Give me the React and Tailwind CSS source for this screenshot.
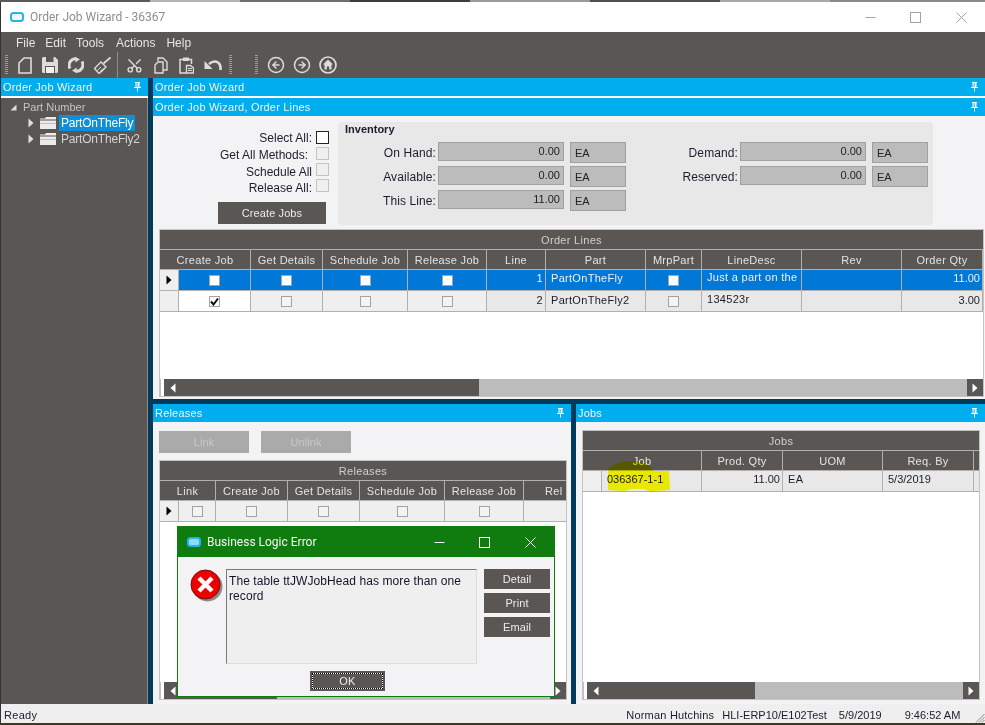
import React from "react";
import { Scissors, CircleArrowLeft, CircleArrowRight } from "lucide-react";

const Pin = () => (
  <svg width="7" height="10" viewBox="0 0 7 10" className="shrink-0">
    <path d="M1 0H6V1H5.5V5H7V6H4V9.5H3V6H0V5H1.5V1H1Z" fill="#fff" />
    <rect x="2.6" y="1" width="1" height="4" fill="#00aeef" />
  </svg>
);

const Header = ({ title, pin = true, className = "" }) => (
  <div className={"h-[18px] bg-[#00aeef] flex items-center justify-between pl-[2px] pr-[7px] text-[#f2f2f2] text-[11px] tracking-[0.2px] shrink-0 " + className}>
    <span className="whitespace-nowrap">{title}</span>
    {pin && <Pin />}
  </div>
);

const Grip = () => (
  <svg width="3" height="20" viewBox="0 0 3 20" className="shrink-0">
    {[0, 2, 4, 6, 8, 10, 12, 14, 16, 18].map((y) => (
      <rect key={y} x="0" y={y} width="3" height="1" fill="#9c9a97" />
    ))}
  </svg>
);

const Logo = ({ inner = "#f4f4f4" }) => (
  <svg width="14" height="10" viewBox="0 0 14 10" className="shrink-0">
    <rect x="1" y="1" width="12" height="8" rx="2.5" fill={inner} stroke="#22b5ea" strokeWidth="2" />
  </svg>
);

const WinButtons = ({ color, gapA, gapB }) => (
  <div className="flex items-center">
    <svg width="11" height="11" viewBox="0 0 11 11"><path d="M0.5 5.5H10.5" stroke={color} strokeWidth="1" /></svg>
    <svg width="11" height="11" viewBox="0 0 11 11" className={gapA}><rect x="0.5" y="0.5" width="10" height="10" fill="none" stroke={color} strokeWidth="1" /></svg>
    <svg width="11" height="11" viewBox="0 0 11 11" className={gapB}><path d="M0.5 0.5L10.5 10.5M10.5 0.5L0.5 10.5" stroke={color} strokeWidth="1" /></svg>
  </div>
);

const IC = "#dcdcdc";

const ToolIcons = () => (
  <div className="h-[26px] flex items-center pl-[4px] shrink-0">
    <Grip />
    <svg width="14" height="17" viewBox="0 0 14 17" className="ml-[10px]">
      <path d="M1 6L6 1H13V16H1Z" fill="none" stroke={IC} strokeWidth="1.6" />
    </svg>
    <svg width="16" height="16" viewBox="0 0 16 16" className="ml-[10px]">
      <path d="M0 1.5Q0 0 1.5 0H13L16 3V14.5Q16 16 14.5 16H1.5Q0 16 0 14.5Z" fill={IC} />
      <rect x="4" y="0" width="7.5" height="5" fill="#595653" />
      <rect x="3" y="9" width="10" height="7" fill="#595653" />
      <rect x="4" y="10" width="8" height="6" fill="#f0f0f0" />
    </svg>
    <svg width="16" height="16" viewBox="0 0 16 16" className="ml-[10px]">
      <path d="M2 11.5A6.5 6.5 0 0 1 8.5 1.8" fill="none" stroke={IC} strokeWidth="3" />
      <path d="M14 4.5A6.5 6.5 0 0 1 7.5 14.2" fill="none" stroke={IC} strokeWidth="3" />
      <path d="M7 0L12 2.2L7.5 5.5Z" fill={IC} />
      <path d="M9 16L4 13.8L8.5 10.5Z" fill={IC} />
    </svg>
    <svg width="17" height="17" viewBox="0 0 17 17" className="ml-[10px]">
      <path d="M16.5 0.5L9.5 6.5" stroke={IC} strokeWidth="1.8" />
      <path d="M7 5L12 10L8 14L5 16.5L0.5 11.5L3.5 8.5Z" fill="none" stroke={IC} strokeWidth="1.4" />
      <path d="M3.5 13.5L7 10M6 15L9 11.5" stroke={IC} strokeWidth="1" />
    </svg>
    <div className="w-px h-[26px] bg-[#8f8d8a] ml-[6px]" />
    <Scissors size={17} color={IC} strokeWidth={2} className="ml-[8px] -rotate-90" />
    <svg width="14" height="17" viewBox="0 0 14 17" className="ml-[11px]">
      <path d="M4 4V1H9L13 5V13H9" fill="none" stroke={IC} strokeWidth="1.4" />
      <path d="M1 8L4 5H9V16H1Z" fill="none" stroke={IC} strokeWidth="1.4" />
    </svg>
    <svg width="15" height="17" viewBox="0 0 15 17" className="ml-[11px]">
      <path d="M4 2.5H1V16H7M10 2.5H12.5V7" fill="none" stroke={IC} strokeWidth="1.5" />
      <rect x="4" y="0.5" width="6" height="3.5" fill={IC} />
      <path d="M7.5 8.5H11.5L14.5 11V16H7.5Z" fill="none" stroke={IC} strokeWidth="1.4" />
      <path d="M9 11.5H13M9 13.5H13" stroke={IC} strokeWidth="1" />
    </svg>
    <svg width="18" height="12" viewBox="0 0 18 12" className="ml-[10px]">
      <path d="M5 5Q10 1 14 3.5Q17 5.5 16.5 11" fill="none" stroke={IC} strokeWidth="2.6" />
      <path d="M0.5 2V10H8.5Z" fill={IC} />
    </svg>
    <div className="ml-[7px]"><Grip /></div>
    <div className="ml-[23px]"><Grip /></div>
    <CircleArrowLeft size={18} color={IC} strokeWidth={2} className="ml-[9px]" />
    <CircleArrowRight size={18} color={IC} strokeWidth={2} className="ml-[8px]" />
    <svg width="18" height="18" viewBox="0 0 18 18" className="ml-[8px]">
      <circle cx="9" cy="9" r="8" fill="none" stroke={IC} strokeWidth="1.7" />
      <path d="M9 3.5L14 8.5H12.5V13.5H10.2V10.5H7.8V13.5H5.5V8.5H4Z" fill={IC} />
    </svg>
  </div>
);

const Tri = ({ color = "#e0e0e0", className = "" }) => (
  <svg width="6" height="10" viewBox="0 0 6 10" className={className}>
    <path d="M0.5 0.5L5.5 5L0.5 9.5Z" fill={color} />
  </svg>
);

const Folder = () => (
  <svg width="16" height="12" viewBox="0 0 16 12" className="shrink-0">
    <path d="M0 1.5H5L6 0H16V2.5H0Z" fill="#ececec" />
    <rect x="0" y="3.5" width="16" height="8.5" fill="#ececec" />
    <rect x="0" y="6" width="16" height="1" fill="#bdbdbd" />
  </svg>
);

const TreeRow = ({ label, selected }) => (
  <div className="h-[16px] flex items-center pl-[27px]">
    <Tri />
    <div className="w-[6px]" />
    <Folder />
    <div className={"ml-[3px] h-[16px] flex items-center px-[2px] text-[12px] tracking-[-0.2px] whitespace-nowrap " + (selected ? "bg-[#0d8fd9] text-white" : "text-[#d4d4d4]")}>
      {label}
    </div>
  </div>
);

const Check = ({ checked, dim }) => (
  <div className={"w-[11px] h-[11px] border border-[#a3a3a3] flex items-center justify-center " + (dim ? "bg-[#f4f4f4]" : "bg-white")}>
    {checked && (
      <svg width="9" height="9" viewBox="0 0 9 9"><path d="M1 4.5L3.5 7.5L8 1.5" fill="none" stroke="#111" strokeWidth="2" /></svg>
    )}
  </div>
);

const Scroll = ({ thumb }) => (
  <div className="h-[17px] flex shrink-0 items-stretch bg-[#bcbcbc] border-l border-[#c0c0c0]">
    <div className="w-[4px] bg-white border-r border-[#595653] shrink-0" />
    <div className={"bg-[#595653] flex items-center pl-[5px] shrink-0 " + thumb}>
      <Tri color="#fff" className="-scale-x-100" />
    </div>
    <div className="flex-1" />
    <div className="w-[16px] bg-[#595653] flex items-center justify-center shrink-0">
      <Tri color="#fff" />
    </div>
  </div>
);

const GridTitle = ({ children }) => (
  <div className="h-[20px] shrink-0 bg-[#595653] border-b border-[#b0b0b0] flex items-center justify-center pt-[2px] text-[#d0d0d0] text-[11px] tracking-[0.3px]">
    {children}
  </div>
);

const HCell = ({ w, children, last, className = "" }) => (
  <div className={w + " shrink-0 h-full flex items-center justify-center pt-[2px] whitespace-nowrap overflow-hidden " + (last ? "" : "border-r border-[#b0b0b0] ") + className}>
    {children}
  </div>
);

const HRow = ({ children }) => (
  <div className="h-[20px] shrink-0 bg-[#595653] border-b border-[#b0b0b0] flex text-[#e4e4e4] text-[11px] tracking-[0.3px]">
    {children}
  </div>
);

const DCell = ({ w, children, cls = "", align = "center" }) => (
  <div
    className={
      w +
      " shrink-0 h-full border-r border-[#b0b0b0] flex items-center whitespace-nowrap overflow-hidden " +
      (align === "center" ? "justify-center " : align === "right" ? "justify-end pr-[2px] " : "justify-start pl-[5px] ") +
      cls
    }
  >
    {children}
  </div>
);

const DRow = ({ children, cls }) => (
  <div className={"h-[21px] shrink-0 border-b border-[#b0b0b0] flex text-[11px] tracking-[0.3px] " + cls}>{children}</div>
);

const Label = ({ children, pr = "pr-[4px]", cls = "" }) => (
  <div className={"h-[16px] flex items-center justify-end text-[12px] text-[#1c1c2c] " + cls}>
    <span className={pr}>{children}</span>
  </div>
);

const InvRow = ({ label, value, labelW }) => (
  <div className="h-[24px] flex items-start">
    <div className={labelW + " h-[19px] pt-[2px] flex items-center justify-end text-[12px] text-[#1c1c2c] tracking-[0.1px]"}>{label}</div>
    <div className="ml-[2px] w-[126px] h-[19px] bg-[#bcbcbc] border border-[#a0a0a0] flex items-center justify-end pr-[3px] text-[11px] text-[#222]">{value}</div>
    <div className="ml-[6px] w-[56px] h-[21px] bg-[#bcbcbc] border border-[#a0a0a0] flex items-center pl-[4px] pt-[2px] text-[11px] text-[#222]">EA</div>
  </div>
);

const Btn = ({ w, children, cls = "bg-[#595653] text-[#ececec]", h = "h-[22px]" }) => (
  <div className={w + " " + h + " " + cls + " flex items-center justify-center text-[11px] tracking-[0.1px] shrink-0"}>{children}</div>
);

const ErrorIcon = () => (
  <svg width="34" height="34" viewBox="0 0 34 34" className="shrink-0">
    <circle cx="17.5" cy="17.5" r="15" fill="#8a8a8a" />
    <circle cx="15.5" cy="15.5" r="14.5" fill="#ee0000" stroke="#7c0b0b" strokeWidth="1" />
    <path d="M9 9L22 22M22 9L9 22" stroke="#fff" strokeWidth="4.4" />
  </svg>
);

const GridBox = ({ children, cls }) => (
  <div className={"border border-[#c4c4c4] bg-white flex flex-col overflow-hidden " + cls}>{children}</div>
);

const TopStrip = () => (
  <div className="h-[2px] shrink-0 flex bg-[#8a8a8a]">
    <div className="w-[150px] bg-[#5a5a5a]" />
    <div className="w-[90px] bg-[#b4b4b4]" />
    <div className="w-[110px] bg-[#6e6e6e]" />
    <div className="w-[120px] bg-[#3c3c3c]" />
    <div className="w-[120px] bg-[#9a9a9a]" />
    <div className="w-[130px] bg-[#505050]" />
    <div className="w-[110px] bg-[#a8a8a8]" />
  </div>
);

export default function App() {
  return (
    <div className="relative w-[985px] h-[725px] overflow-hidden flex flex-col bg-[#333] font-['Liberation_Sans',sans-serif]">
      <TopStrip />
      <div className="flex-1 min-h-0 flex flex-col ml-px bg-[#efefef]">
        <div className="h-[30px] shrink-0 bg-white flex items-center justify-between pl-[9px] pr-[18px]">
          <div className="flex items-center gap-[6px]">
            <Logo />
            <span className="text-[12px] text-[#8e8e8e] font-['Roboto',sans-serif]">Order Job Wizard - 36367</span>
          </div>
          <WinButtons color="#a3a3a3" gapA="ml-[34px]" gapB="ml-[35px]" />
        </div>

        <div className="h-[46px] shrink-0 bg-[#595653] flex flex-col">
          <div className="h-[20px] shrink-0 flex items-center pl-[15px] gap-[10px] text-[12px] text-[#e6e6e6] pt-[1px]">
            <span>File</span><span>Edit</span><span>Tools</span><span className="ml-[2px]">Actions</span><span className="ml-[1px]">Help</span>
          </div>
          <ToolIcons />
        </div>

        <div className="h-[626px] shrink-0 flex bg-[#023a5c]">
          <div className="w-[147px] shrink-0 flex flex-col bg-[#595653]">
            <Header title="Order Job Wizard" />
            <div className="h-[2px] bg-white shrink-0" />
            <div className="flex-1 pt-[1px] border-r border-[#8a8a8a]">
              <div className="h-[16px] flex items-center pl-[9px] text-[11px] text-[#c4c4c4]">
                <svg width="7" height="7" viewBox="0 0 7 7"><path d="M6.5 0.5V6.5H0.5Z" fill="#dcdcdc" /></svg>
                <span className="ml-[6px]">Part Number</span>
              </div>
              <TreeRow label="PartOnTheFly" selected />
              <TreeRow label="PartOnTheFly2" />
            </div>
          </div>

          <div className="w-[5px] shrink-0" />

          <div className="flex-1 min-w-0 flex flex-col">
            <Header title="Order Job Wizard" />
            <div className="h-[2px] bg-white shrink-0" />
            <Header title="Order Job Wizard, Order Lines" />

            <div className="h-[283px] shrink-0 bg-[#f3f3f5] flex flex-col">
              <div className="h-[113px] shrink-0 flex">
                <div className="w-[185px] shrink-0 pt-[15px]">
                  <div className="w-[176px]">
                    <div className="flex flex-col">
                      <div className="flex justify-end items-start h-[16px]"><Label cls="pb-[2px]">Select All:</Label><div className="w-[13px] h-[13px] border border-[#222] bg-white" /></div>
                      <div className="flex justify-end items-start h-[16px]"><Label pr="pr-[8px]">Get All Methods:</Label><div className="w-[13px] h-[13px] border border-[#c4c4c4] bg-[#efefef]" /></div>
                      <div className="flex justify-end items-start h-[16px]"><Label cls="pt-[2px]">Schedule All</Label><div className="w-[13px] h-[13px] border border-[#c4c4c4] bg-[#efefef]" /></div>
                      <div className="flex justify-end items-start h-[16px]"><Label cls="pt-[2px]">Release All:</Label><div className="w-[13px] h-[13px] border border-[#c4c4c4] bg-[#efefef]" /></div>
                    </div>
                    <div className="mt-[7px] ml-[65px]"><Btn w="w-[108px]">Create Jobs</Btn></div>
                  </div>
                </div>
                <div className="w-[595px] h-[103px] mt-[6px] shrink-0 bg-[#e8e8e8] rounded-[4px]">
                  <div className="h-[20px] pl-[7px] pt-[1px] flex items-start text-[11px] leading-[12px] font-bold text-[#1c1c2c]">Inventory</div>
                  <div className="flex">
                    <div className="flex flex-col">
                      <InvRow label="On Hand:" value="0.00" labelW="w-[98px]" />
                      <InvRow label="Available:" value="0.00" labelW="w-[98px]" />
                      <InvRow label="This Line:" value="11.00" labelW="w-[98px]" />
                    </div>
                    <div className="flex flex-col">
                      <InvRow label="Demand:" value="0.00" labelW="w-[112px]" />
                      <InvRow label="Reserved:" value="0.00" labelW="w-[112px]" />
                    </div>
                  </div>
                </div>
              </div>

              <GridBox cls="ml-[6px] w-[825px] h-[168px] shrink-0">
                <GridTitle>Order Lines</GridTitle>
                <HRow>
                  <HCell w="w-[91px]">Create Job</HCell>
                  <HCell w="w-[72px]">Get Details</HCell>
                  <HCell w="w-[85px]">Schedule Job</HCell>
                  <HCell w="w-[79px]">Release Job</HCell>
                  <HCell w="w-[59px]">Line</HCell>
                  <HCell w="w-[100px]">Part</HCell>
                  <HCell w="w-[56px]">MrpPart</HCell>
                  <HCell w="w-[100px]">LineDesc</HCell>
                  <HCell w="w-[100px]">Rev</HCell>
                  <HCell w="w-[81px]">Order Qty</HCell>
                </HRow>
                <DRow cls="bg-[#0078d7] text-[#f0f0f0]">
                  <DCell w="w-[19px]" cls="bg-[#efefef]"><Tri color="#000" /></DCell>
                  <DCell w="w-[72px]"><Check /></DCell>
                  <DCell w="w-[72px]"><Check /></DCell>
                  <DCell w="w-[85px]"><Check /></DCell>
                  <DCell w="w-[79px]"><Check /></DCell>
                  <DCell w="w-[59px]" align="right" cls="pb-[3px]">1</DCell>
                  <DCell w="w-[100px]" align="left" cls="pb-[3px]">PartOnTheFly</DCell>
                  <DCell w="w-[56px]"><Check /></DCell>
                  <DCell w="w-[100px]" align="left" cls="pb-[5px]">Just a part on the</DCell>
                  <DCell w="w-[100px]" />
                  <DCell w="w-[81px]" align="right" cls="pb-[3px] tracking-normal">11.00</DCell>
                </DRow>
                <DRow cls="bg-[#efefef] text-[#1c1c2c]">
                  <DCell w="w-[19px]" />
                  <DCell w="w-[72px]" cls="bg-white"><Check checked /></DCell>
                  <DCell w="w-[72px]"><Check dim /></DCell>
                  <DCell w="w-[85px]"><Check dim /></DCell>
                  <DCell w="w-[79px]"><Check dim /></DCell>
                  <DCell w="w-[59px]" align="right" cls="bg-[#e8e8e8] pb-[2px]">2</DCell>
                  <DCell w="w-[100px]" align="left" cls="bg-[#e8e8e8] pb-[2px]">PartOnTheFly2</DCell>
                  <DCell w="w-[56px]" cls="bg-[#e8e8e8]"><Check dim /></DCell>
                  <DCell w="w-[100px]" align="left" cls="bg-[#e8e8e8] pb-[3px]">134523r</DCell>
                  <DCell w="w-[100px]" cls="bg-[#e8e8e8]" />
                  <DCell w="w-[81px]" align="right" cls="bg-[#e8e8e8] pb-[2px] tracking-normal">3.00</DCell>
                </DRow>
                <div className="flex-1" />
                <Scroll thumb="w-[314px]" />
              </GridBox>
            </div>

            <div className="h-[5px] shrink-0" />

            <div className="h-[300px] shrink-0 flex">
              <div className="w-[418px] shrink-0 flex flex-col bg-[#f3f3f5]">
                <Header title="Releases" />
                <div className="pl-[6px] pt-[9px] flex gap-[12px] shrink-0">
                  <Btn w="w-[90px]" cls="bg-[#aaaaaa] text-[#c8c8c8]">Link</Btn>
                  <Btn w="w-[90px]" cls="bg-[#aaaaaa] text-[#c8c8c8]">Unlink</Btn>
                </div>
                <GridBox cls="ml-[6px] mt-[7px] w-[408px] h-[240px]">
                  <GridTitle>Releases</GridTitle>
                  <HRow>
                    <HCell w="w-[56px]">Link</HCell>
                    <HCell w="w-[72px]">Create Job</HCell>
                    <HCell w="w-[72px]">Get Details</HCell>
                    <HCell w="w-[85px]">Schedule Job</HCell>
                    <HCell w="w-[79px]">Release Job</HCell>
                    <HCell w="w-[42px]" last className="!justify-start pl-[21px]">Rel</HCell>
                  </HRow>
                  <DRow cls="bg-[#efefef] text-[#1c1c2c]">
                    <DCell w="w-[19px]"><Tri color="#000" /></DCell>
                    <DCell w="w-[37px]"><Check dim /></DCell>
                    <DCell w="w-[72px]"><Check dim /></DCell>
                    <DCell w="w-[72px]"><Check dim /></DCell>
                    <DCell w="w-[85px]"><Check dim /></DCell>
                    <DCell w="w-[79px]"><Check dim /></DCell>
                  </DRow>
                  <div className="flex-1" />
                  <Scroll thumb="w-[112px]" />
                </GridBox>
              </div>

              <div className="w-[5px] shrink-0" />

              <div className="flex-1 min-w-0 flex flex-col bg-[#f3f3f5]">
                <Header title="Jobs" />
                <GridBox cls="relative ml-[6px] mt-[8px] w-[398px] h-[270px]">
                  <GridTitle>Jobs</GridTitle>
                  <HRow>
                    <HCell w="w-[119px]">Job</HCell>
                    <HCell w="w-[81px]">Prod. Qty</HCell>
                    <HCell w="w-[100px]">UOM</HCell>
                    <HCell w="w-[91px]">Req. By</HCell>
                  </HRow>
                  <DRow cls="bg-[#e8e8e8] text-[#1c1c2c]">
                    <DCell w="w-[19px]" cls="bg-[#efefef]" />
                    <DCell w="w-[100px]" align="left" cls="pb-[3px] tracking-normal">036367-1-1</DCell>
                    <DCell w="w-[81px]" align="right" cls="pb-[3px] tracking-normal">11.00</DCell>
                    <DCell w="w-[100px]" align="left" cls="pb-[3px]">EA</DCell>
                    <DCell w="w-[91px]" align="left" cls="pb-[3px] tracking-normal">5/3/2019</DCell>
                  </DRow>
                  <div className="flex-1" />
                  <Scroll thumb="w-[167px]" />
                  <svg width="64" height="32" viewBox="0 0 64 32" className="absolute left-[24px] top-[30px] mix-blend-multiply">
                    <path d="M1 11L2 7Q8 3 14 1Q25 -1 36 2Q42 3 47 10H62L63 29L48 30L44 31L37 28H24L18 30L1 29Z" fill="#ffff00" />
                  </svg>
                </GridBox>
              </div>
            </div>
          </div>
        </div>

        <div className="h-[19px] shrink-0 bg-[#efefef] flex items-center pt-[3px] text-[11px] text-[#1c1c2c] pl-[3px]">
          <span className="tracking-[0.3px]">Ready</span>
          <span className="ml-[589px] whitespace-nowrap tracking-[0.2px]">Norman Hutchins</span>
          <span className="ml-[8px] whitespace-nowrap">HLI-ERP10/E102Test</span>
          <span className="ml-[12px] whitespace-nowrap">5/9/2019</span>
          <span className="ml-[23px] whitespace-nowrap">9:46:52 AM</span>
          <svg width="10" height="10" viewBox="0 0 10 10" className="ml-auto self-end">
            <path d="M9.5 1L1 9.5M9.5 4L4 9.5M9.5 7L7 9.5" stroke="#8a8a8a" strokeWidth="1" />
          </svg>
        </div>
      </div>
      <div className="h-[2px] shrink-0 bg-[#3a3a22]" />

      <div className="absolute left-[177px] top-[526px] w-[378px] h-[171px] border border-[#107c10] bg-[#f3f3f5] flex flex-col">
        <div className="h-[30px] shrink-0 bg-[#107c10] flex items-center justify-between pl-[9px] pr-[18px]">
          <div className="flex items-center gap-[6px]">
            <Logo inner="#8fdcf5" />
            <span className="text-[12px] text-[#f4f4f4] font-['Roboto',sans-serif]">Business Logic Error</span>
          </div>
          <WinButtons color="#ffffff" gapA="ml-[34px]" gapB="ml-[35px]" />
        </div>
        <div className="flex pl-[12px] pt-[12px]">
          <div className="w-[36px] shrink-0"><ErrorIcon /></div>
          <div className="w-[251px] h-[95px] shrink-0 bg-[#efefef] border border-t-[#7a7a7a] border-l-[#7a7a7a] border-r-[#dddddd] border-b-[#dddddd] pl-[2px] pt-[4px] text-[12px] tracking-[0.08px] leading-[15px] text-[#14142c]">
            The table ttJWJobHead has more than one record
          </div>
          <div className="ml-[7px] flex flex-col gap-[4px]">
            <Btn w="w-[66px]" h="h-[20px]">Detail</Btn>
            <Btn w="w-[66px]" h="h-[20px]">Print</Btn>
            <Btn w="w-[66px]" h="h-[20px]">Email</Btn>
          </div>
        </div>
        <div className="ml-[132px] mt-[7px] w-[75px] h-[20px] bg-[#595653] p-[2px]">
          <div className="w-full h-full border border-dotted border-black bg-white">
            <div className="w-full h-full bg-[#595653] flex items-center justify-center text-[11px] tracking-[0.3px] text-[#ececec]">OK</div>
          </div>
        </div>
      </div>
    </div>
  );
}
